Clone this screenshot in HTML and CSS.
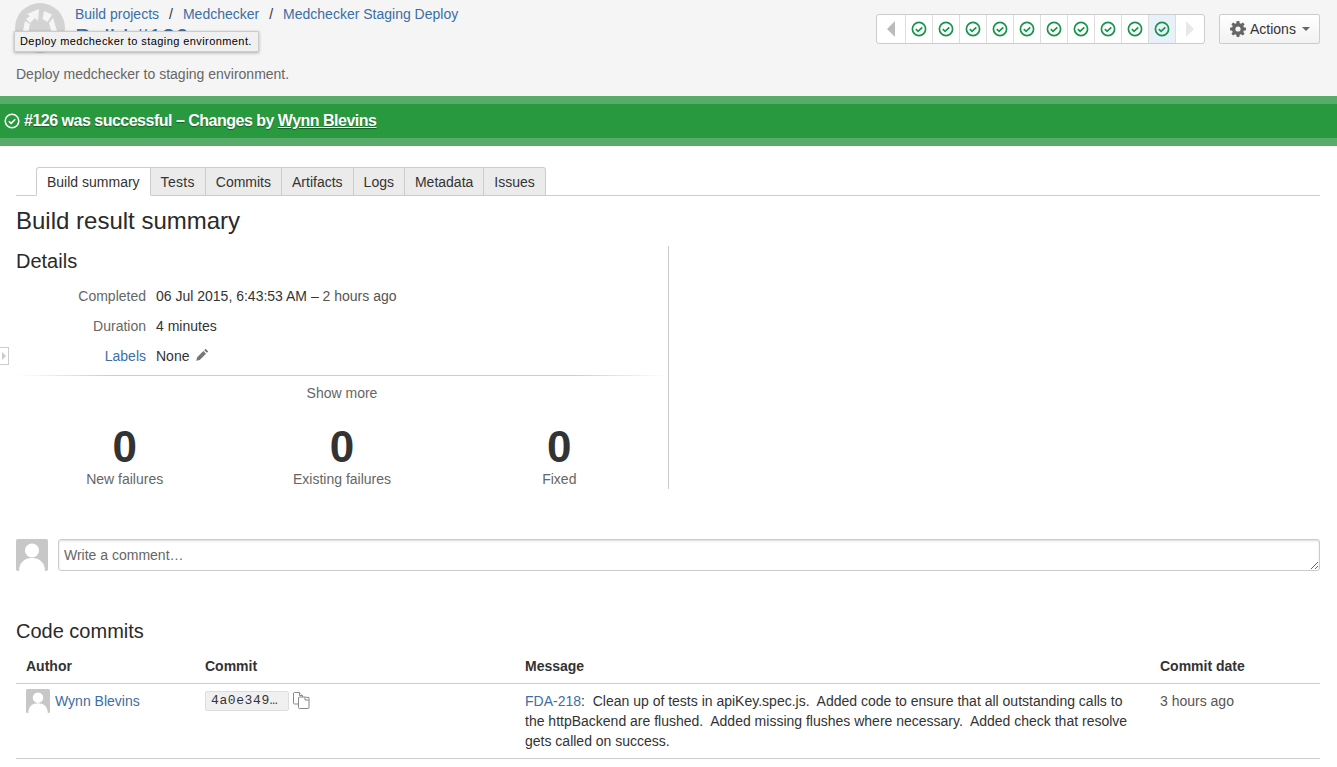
FILE: index.html
```html
<!DOCTYPE html>
<html lang="en">
<head>
    <meta charset="UTF-8">
    <title>Medchecker Staging Deploy - Build #126</title>
    <link rel="stylesheet" href="styles.css">
</head>
<body>

<!-- Page header -->
<div class="page-header">
    <div class="header-top">
        <svg class="project-logo" viewBox="0 0 50 50">
            <circle cx="25" cy="25" r="25" fill="#d3d3d3"/>
            <path d="M12 11l12-5-1 12-3-3-5 5-4-4 4-3z" fill="#f5f5f5"/>
            <path d="M29 8l8 3.500-4.500 7.500-5-3z" fill="#f5f5f5"/>
            <path d="M38 15l4 13-5.500 1-2.500-9z" fill="#f5f5f5"/>
            <path d="M10 18l5 3-1.500 7-5.500 0z" fill="#f5f5f5"/>
        </svg>
        <div class="header-titles">
            <div class="breadcrumbs">
                <a href="#">Build projects</a><span class="crumb-sep">/</span><a href="#">Medchecker</a><span class="crumb-sep">/</span><a href="#">Medchecker Staging Deploy</a>
            </div>
            <h1 class="build-title"><a href="#">Build #126</a></h1>
        </div>
        <div class="header-actions">
            <div class="build-nav">
                <div class="nav-cell"><span class="arrow-left"></span></div>
                <div class="nav-cell"><svg class="check-icon" viewBox="0 0 16 16"><circle cx="8" cy="8" r="6.600"/><path d="M4.800 8.200l2.300 2.200 4.200-4"/></svg></div>
                <div class="nav-cell"><svg class="check-icon" viewBox="0 0 16 16"><circle cx="8" cy="8" r="6.600"/><path d="M4.800 8.200l2.300 2.200 4.200-4"/></svg></div>
                <div class="nav-cell"><svg class="check-icon" viewBox="0 0 16 16"><circle cx="8" cy="8" r="6.600"/><path d="M4.800 8.200l2.300 2.200 4.200-4"/></svg></div>
                <div class="nav-cell"><svg class="check-icon" viewBox="0 0 16 16"><circle cx="8" cy="8" r="6.600"/><path d="M4.800 8.200l2.300 2.200 4.200-4"/></svg></div>
                <div class="nav-cell"><svg class="check-icon" viewBox="0 0 16 16"><circle cx="8" cy="8" r="6.600"/><path d="M4.800 8.200l2.300 2.200 4.200-4"/></svg></div>
                <div class="nav-cell"><svg class="check-icon" viewBox="0 0 16 16"><circle cx="8" cy="8" r="6.600"/><path d="M4.800 8.200l2.300 2.200 4.200-4"/></svg></div>
                <div class="nav-cell"><svg class="check-icon" viewBox="0 0 16 16"><circle cx="8" cy="8" r="6.600"/><path d="M4.800 8.200l2.300 2.200 4.200-4"/></svg></div>
                <div class="nav-cell"><svg class="check-icon" viewBox="0 0 16 16"><circle cx="8" cy="8" r="6.600"/><path d="M4.800 8.200l2.300 2.200 4.200-4"/></svg></div>
                <div class="nav-cell"><svg class="check-icon" viewBox="0 0 16 16"><circle cx="8" cy="8" r="6.600"/><path d="M4.800 8.200l2.300 2.200 4.200-4"/></svg></div>
                <div class="nav-cell nav-current"><svg class="check-icon" viewBox="0 0 16 16"><circle cx="8" cy="8" r="6.600"/><path d="M4.800 8.200l2.300 2.200 4.200-4"/></svg></div>
                <div class="nav-cell nav-last"><span class="arrow-right"></span></div>
            </div>
            <button class="actions-btn" type="button">
                <svg class="gear-icon" viewBox="0 0 16 16"><path d="M6.700 0h2.600l.4 2.200 1.300.5 1.800-1.300 1.800 1.800-1.300 1.800.5 1.300 2.200.4v2.600l-2.200.4-.5 1.300 1.300 1.800-1.800 1.800-1.800-1.300-1.300.5-.4 2.200H6.700l-.4-2.200-1.300-.5-1.800 1.300-1.800-1.800 1.300-1.800-.5-1.300L0 9.300V6.700l2.200-.4.500-1.300-1.300-1.800 1.800-1.800L5 2.700l1.300-.5zM8 5.400a2.600 2.600 0 1 0 0 5.200 2.600 2.600 0 0 0 0-5.200z" fill-rule="evenodd"/></svg>
                Actions<span class="caret"></span>
            </button>
        </div>
    </div>
    <p class="header-desc">Deploy medchecker to staging environment.</p>
    <div class="tooltip">Deploy medchecker to staging environment.</div>
</div>

<!-- Status banner -->
<div class="status-banner">
    <svg class="banner-check" viewBox="0 0 16 16"><circle cx="8" cy="8" r="6.800"/><path d="M4.800 8.200l2.300 2.200 4.200-4.200"/></svg>
    <span class="banner-text">#126 was successful &ndash; Changes by <a href="#">Wynn Blevins</a></span>
</div>

<div class="sidebar-toggle"><span class="toggle-arrow"></span></div>

<div class="content">
    <ul class="tabs">
        <li class="tab tab-active">Build summary</li>
        <li class="tab tab-tests">Tests</li>
        <li class="tab">Commits</li>
        <li class="tab">Artifacts</li>
        <li class="tab">Logs</li>
        <li class="tab">Metadata</li>
        <li class="tab">Issues</li>
    </ul>

    <h2 class="section-title">Build result summary</h2>

    <div class="summary-col">
        <h3 class="details-title">Details</h3>
        <dl class="details">
            <dt>Completed</dt>
            <dd>06 Jul 2015, 6:43:53 AM &ndash; <span class="muted">2 hours ago</span></dd>
            <dt>Duration</dt>
            <dd>4 minutes</dd>
            <dt><a href="#">Labels</a></dt>
            <dd>None
                <svg class="pencil-icon" viewBox="0 0 14 14"><path d="M10.300.800l2.900 2.900-1.500 1.500-2.900-2.900zM7.900 3.200l2.900 2.900-6.700 6.700-3.900 1 1-3.900z"/></svg>
            </dd>
        </dl>
        <div class="show-more">Show more</div>
        <div class="stats">
            <div class="stat"><div class="stat-num">0</div><div class="stat-label">New failures</div></div>
            <div class="stat"><div class="stat-num">0</div><div class="stat-label">Existing failures</div></div>
            <div class="stat"><div class="stat-num">0</div><div class="stat-label">Fixed</div></div>
        </div>
    </div>

    <div class="comment-row">
        <svg class="avatar avatar-lg" viewBox="0 0 32 32"><rect width="32" height="32" rx="2" fill="#c7c7c7"/><circle cx="16" cy="11.500" r="7" fill="#fff"/><path d="M3 32c0-9 6-13 13-13s13 4 13 13z" fill="#fff"/></svg>
        <textarea class="comment-input" placeholder="Write a comment…"></textarea>
    </div>

    <h2 class="commits-title">Code commits</h2>
    <table class="commits">
        <tr>
            <th class="col-author">Author</th>
            <th class="col-commit">Commit</th>
            <th class="col-message">Message</th>
            <th>Commit date</th>
        </tr>
        <tr>
            <td>
                <div class="author">
                    <svg class="avatar" viewBox="0 0 32 32"><rect width="32" height="32" rx="2" fill="#c7c7c7"/><circle cx="16" cy="11.500" r="7" fill="#fff"/><path d="M3 32c0-9 6-13 13-13s13 4 13 13z" fill="#fff"/></svg>
                    <a href="#">Wynn Blevins</a>
                </div>
            </td>
            <td>
                <div class="commit-cell">
                    <code class="hash">4a0e349…</code>
                    <svg class="copy-icon" viewBox="0 0 17 17"><path d="M1.500.5h5l3 3v8.500h-8a1 1 0 0 1-1-1v-10a1 1 0 0 1 1-.5z"/><path d="M6.500.5v3h3"/><path d="M6 5h5l5 .5v10a1 1 0 0 1-1 1H6.500a1 1 0 0 1-1-1V5.500z"/><path d="M12 5v3h4"/></svg>
                </div>
            </td>
            <td><a href="#">FDA-218</a>:&nbsp; Clean up of tests in apiKey.spec.js.&nbsp; Added code to ensure that all outstanding calls to the httpBackend are flushed.&nbsp; Added missing flushes where necessary.&nbsp; Added check that resolve gets called on success.</td>
            <td class="muted">3 hours ago</td>
        </tr>
    </table>
</div>

</body>
</html>
```

FILE: styles.css
```css
* {
    box-sizing: border-box;
}
html, body {
    overflow: hidden;
}
body {
    margin: 0;
    height: 767px;
    font-family: "Liberation Sans", Arial, sans-serif;
    font-size: 14px;
    line-height: 20px;
    color: #333;
    background-color: #fff;
}
a {
    color: #3b6ea5;
    text-decoration: none;
}
.muted {
    color: #555;
}

/* header */
.page-header {
    position: relative;
    height: 96px;
    padding: 3px 17px 0 15px;
    background-color: #f5f5f5;
}
.header-top {
    display: flex;
    height: 53px;
}
.project-logo {
    width: 50px;
    height: 50px;
    flex: none;
}
.header-titles {
    margin-left: 10px;
}
.breadcrumbs {
    margin-top: 1px;
    height: 20px;
}
.crumb-sep {
    margin: 0 10px;
    color: #333;
}
.build-title {
    margin: 0;
    font-size: 24px;
    line-height: 28px;
    font-weight: normal;
}
.header-actions {
    display: flex;
    margin-left: auto;
    margin-top: 11px;
    height: 30px;
}
.build-nav {
    display: flex;
    height: 30px;
    border: 1px solid #ccc;
    border-radius: 3px;
    background-color: #fff;
}
.nav-cell {
    display: flex;
    align-items: center;
    justify-content: center;
    width: 27px;
    border-right: 1px solid #ddd;
}
.nav-cell:first-child {
    width: 29px;
}
.nav-last {
    width: 28px;
    border-right: 0;
}
.nav-current {
    background-color: #e8f0f9;
}
.check-icon {
    width: 16px;
    height: 16px;
    fill: none;
    stroke: #14954a;
    stroke-width: 1.700;
}
.arrow-left, .arrow-right {
    width: 0;
    height: 0;
    border-top: 8px solid transparent;
    border-bottom: 8px solid transparent;
}
.arrow-left {
    border-right: 8px solid #bbb;
}
.arrow-right {
    border-left: 8px solid #e8e8e8;
}
.actions-btn {
    display: flex;
    align-items: center;
    width: 101px;
    height: 30px;
    margin-left: 14px;
    padding: 0 0 0 10px;
    border: 1px solid #ccc;
    border-radius: 2px;
    background: linear-gradient(#fff, #f2f2f2);
    font: inherit;
    color: #333;
}
.gear-icon {
    width: 16px;
    height: 16px;
    margin-right: 4px;
    fill: #666;
}
.caret {
    width: 0;
    height: 0;
    margin-left: 6px;
    border-top: 4px solid #666;
    border-left: 4px solid transparent;
    border-right: 4px solid transparent;
}
.header-desc {
    margin: 8px 0 0 1px;
    color: #666;
}
.tooltip {
    position: absolute;
    left: 14px;
    top: 31px;
    height: 21px;
    padding: 0 6px 0 5px;
    background-color: #f0f0f0;
    border: 1px solid #ccc;
    box-shadow: 0 1px 3px rgba(0, 0, 0, 0.3);
    font-size: 11px;
    line-height: 19px;
    letter-spacing: 0.42px;
    color: #000;
}

/* status banner */
.status-banner {
    display: flex;
    align-items: center;
    height: 50px;
    padding-left: 4px;
    background-color: #28993f;
    border-top: 8px solid #56ac68;
    border-bottom: 8px solid #56ac68;
    color: #fff;
    font-size: 16px;
    text-shadow: 0 1px 1px rgba(0, 0, 0, 0.4);
}
.banner-check {
    width: 16px;
    height: 16px;
    margin-right: 4px;
    fill: none;
    stroke: #fff;
    stroke-width: 1.500;
}
.banner-text {
    font-weight: bold;
    letter-spacing: -0.5px;
}
.banner-text a {
    color: #fff;
    text-decoration: underline;
}
.sidebar-toggle {
    position: absolute;
    left: -1px;
    top: 347px;
    display: flex;
    align-items: center;
    justify-content: center;
    width: 10px;
    height: 18px;
    border: 1px solid #ccc;
    background-color: #fff;
}
.toggle-arrow {
    width: 0;
    height: 0;
    border-top: 4px solid transparent;
    border-bottom: 4px solid transparent;
    border-left: 4px solid #ccc;
}

/* main content */
.content {
    padding: 21px 17px 0 16px;
}
.tabs {
    display: flex;
    height: 29px;
    margin: 0;
    padding: 0 0 0 20px;
    list-style: none;
    border-bottom: 1px solid #ccc;
}
.tab {
    height: 29px;
    padding: 4px 10px 0;
    background-color: #ebebeb;
    border: 1px solid #ccc;
    border-left: 0;
    color: #333;
}
.tab:first-child {
    border-radius: 3px 0 0 0;
}
.tab:last-child {
    border-radius: 0 3px 0 0;
}
.tab-tests {
    letter-spacing: 0.3px;
}
.tab-active {
    background-color: #fff;
    border-left: 1px solid #ccc;
    border-bottom-color: #fff;
}
.section-title {
    margin: 8px 0 0;
    height: 42px;
    font-size: 24px;
    line-height: 34px;
    font-weight: normal;
    color: #2a2a2a;
}
.summary-col {
    width: 653px;
    height: 243px;
    border-right: 1px solid #ccc;
}
.details-title {
    margin: 0;
    height: 35px;
    font-size: 20px;
    line-height: 30px;
    font-weight: normal;
    color: #2a2a2a;
}
.details {
    display: grid;
    grid-template-columns: 130px 1fr;
    grid-auto-rows: 30px;
    column-gap: 10px;
    height: 95px;
    margin: 0;
    padding-top: 5px;
    background: linear-gradient(90deg, #fff, #ccc 15%, #ccc 85%, #fff) bottom / 100% 1px no-repeat;
}
.details dt {
    text-align: right;
    color: #666;
}
.details dd {
    margin: 0;
}
.pencil-icon {
    width: 13px;
    height: 13px;
    margin-left: 3px;
    fill: #777;
}
.show-more {
    margin-top: 7px;
    text-align: center;
    color: #666;
}
.stats {
    display: grid;
    grid-template-columns: repeat(3, 1fr);
    margin-top: 22px;
}
.stat {
    text-align: center;
}
.stat-num {
    height: 44px;
    font-size: 44px;
    line-height: 44px;
    font-weight: bold;
}
.stat-label {
    color: #666;
}
.comment-row {
    display: flex;
    margin-top: 50px;
}
.avatar {
    width: 24px;
    height: 24px;
    flex: none;
}
.avatar-lg {
    width: 32px;
    height: 32px;
}
.comment-input {
    flex: 1;
    height: 32px;
    margin: 0 0 0 10px;
    padding: 5px;
    border: 1px solid #ccc;
    border-radius: 3px;
    box-shadow: inset 0 1px 2px rgba(0, 0, 0, 0.15);
    font: inherit;
    color: #333;
}
.comment-input::placeholder {
    color: #666;
    opacity: 1;
}
.commits-title {
    margin: 44px 0 0;
    font-size: 20px;
    line-height: 32px;
    font-weight: normal;
    color: #2a2a2a;
}
.commits {
    width: 1304px;
    margin-top: 3px;
    border-collapse: collapse;
    table-layout: fixed;
}
.commits th {
    height: 33px;
    padding: 0 10px;
    text-align: left;
    color: #333;
    border-bottom: 1px solid #ccc;
}
.commits td {
    height: 75px;
    padding: 7px 10px 7px;
    vertical-align: top;
    border-bottom: 1px solid #ccc;
}
.col-author {
    width: 179px;
}
.col-commit {
    width: 320px;
}
.col-message {
    width: 635px;
}
.author {
    display: flex;
    align-items: center;
    gap: 5px;
    margin-top: -2px;
}
.commit-cell {
    display: flex;
    align-items: flex-start;
}
.hash {
    display: block;
    width: 84px;
    height: 20px;
    padding-left: 5px;
    background-color: #f0f0f0;
    border: 1px solid #ddd;
    border-radius: 2px;
    font-family: "Liberation Mono", monospace;
    font-size: 13px;
    letter-spacing: 0.6px;
    line-height: 18px;
}
.copy-icon {
    width: 17px;
    height: 17px;
    margin-left: 4px;
    margin-top: 1px;
    fill: #fff;
    stroke: #888;
    stroke-width: 1;
}
```
